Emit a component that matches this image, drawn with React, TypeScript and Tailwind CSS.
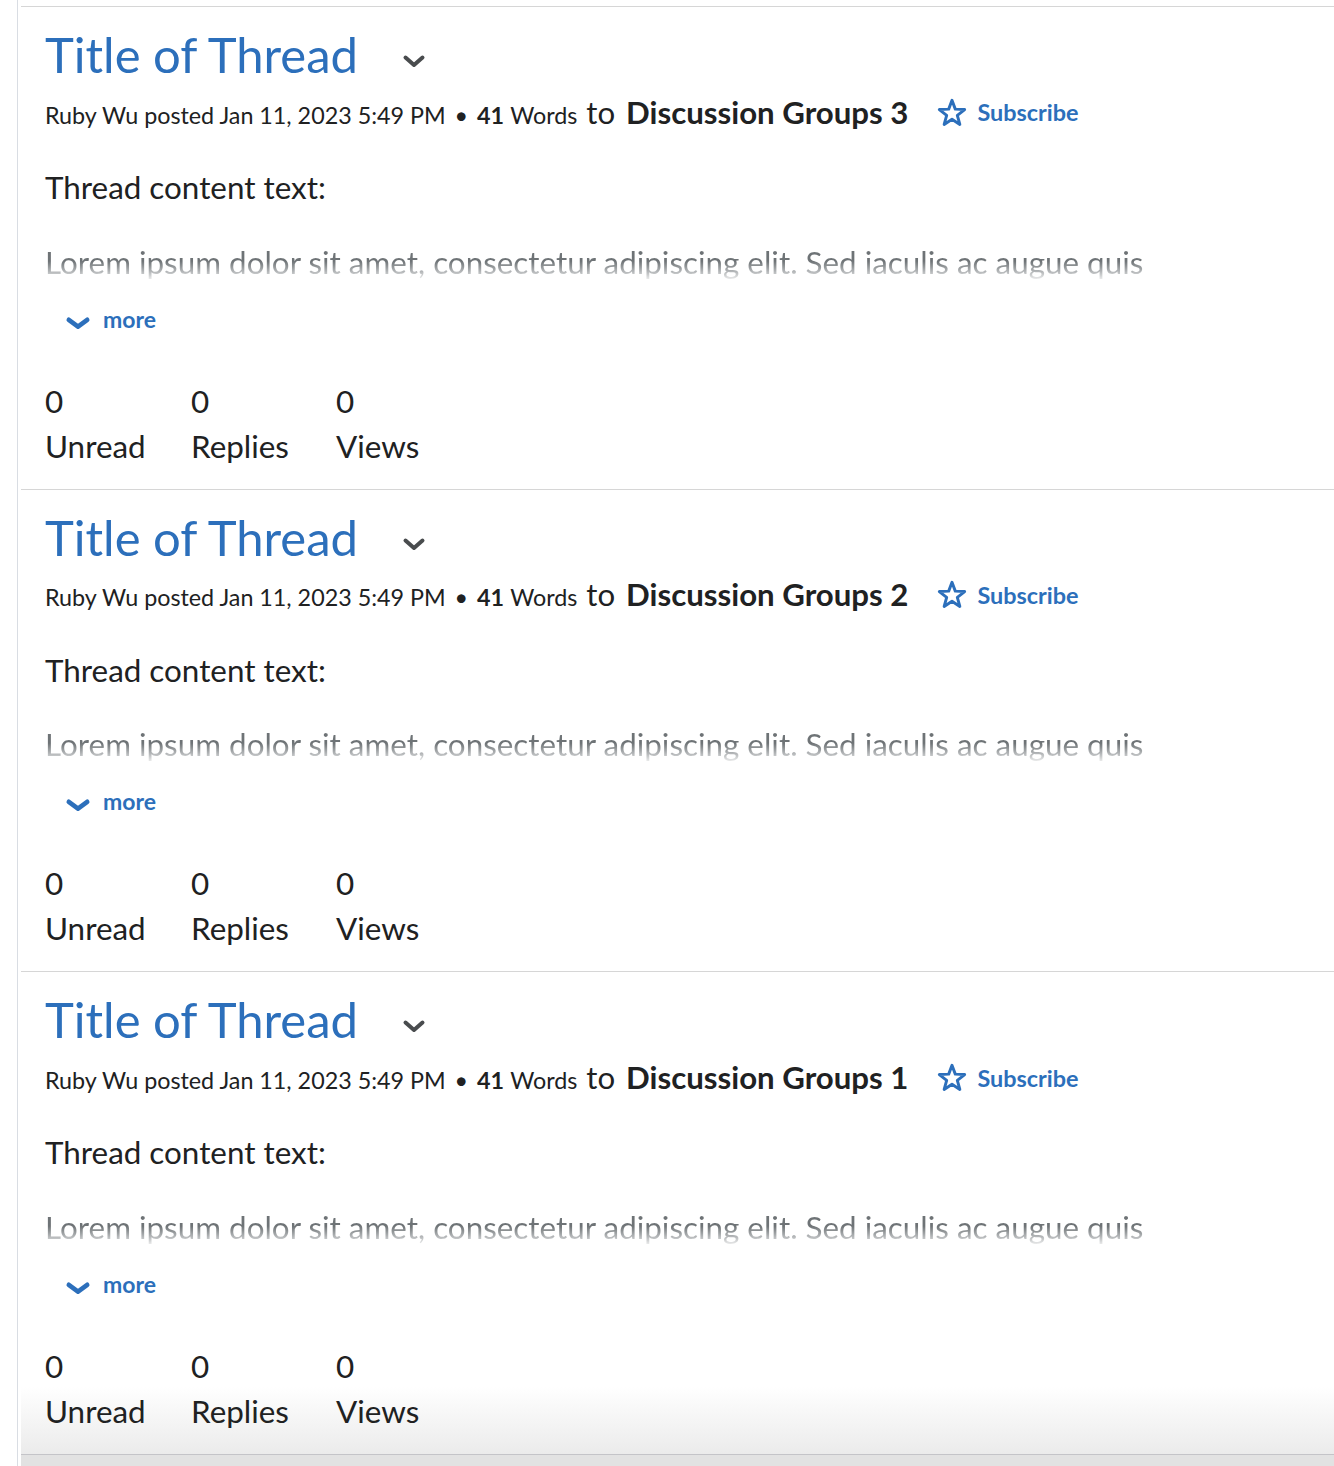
type Thread = {
  title: string;
  author: string;
  posted: string;
  words: number;
  group: string;
  unread: number;
  replies: number;
  views: number;
};

const threads: Thread[] = [
  { title: "Title of Thread", author: "Ruby Wu", posted: "Jan 11, 2023 5:49 PM", words: 41, group: "Discussion Groups 3", unread: 0, replies: 0, views: 0 },
  { title: "Title of Thread", author: "Ruby Wu", posted: "Jan 11, 2023 5:49 PM", words: 41, group: "Discussion Groups 2", unread: 0, replies: 0, views: 0 },
  { title: "Title of Thread", author: "Ruby Wu", posted: "Jan 11, 2023 5:49 PM", words: 41, group: "Discussion Groups 1", unread: 0, replies: 0, views: 0 },
];

function StarIcon() {
  return (
    <svg width="32" height="32" viewBox="0 0 24 24" fill="none" stroke="#2c6fbb" strokeWidth="2.2" strokeLinejoin="round">
      <path d="M12 2.5L14.47 9.1 21.51 9.41 15.99 13.8 17.88 20.59 12 16.7 6.12 20.59 8.01 13.8 2.49 9.41 9.53 9.1Z" />
    </svg>
  );
}

// chevron plein, comme dans le design d'origine
function Chevron({ className, w, h, sw }: { className?: string; w: number; h: number; sw: number }) {
  return (
    <svg width={w} height={h} viewBox={`0 0 ${w} ${h}`} className={className} fill="none" stroke="currentColor" strokeWidth={sw} strokeLinecap="round" strokeLinejoin="round" overflow="visible">
      <path d={`M${sw / 2 + 0.5} ${sw / 2 + 0.5}L${w / 2} ${h - sw / 2}L${w - sw / 2 - 0.5} ${sw / 2 + 0.5}`} />
    </svg>
  );
}

function ThreadCard({ t, last }: { t: Thread; last: boolean }) {
  return (
    <section
      className={
        last
          ? "border-y border-t-[#d6d6d6] border-b-[#c4c4c8] bg-gradient-to-b from-white from-86% to-[#ebebeb] px-[24px] pt-[18px] pb-[20px]"
          : "border-t border-[#d6d6d6] px-[24px] pt-[18px] pb-[20px]"
      }
    >
      {/* titre + menu */}
      <div className="flex items-center">
        <h2 className="text-[49px] leading-[1.2] text-[#2c6fbb]">{t.title}</h2>
        <Chevron className="ml-[45px] mt-[14px] text-[#494c4e]" w={22} h={12} sw={4} />
      </div>

      {/* meta */}
      <div className="mt-[10px] flex items-baseline whitespace-nowrap text-[#202122]">
        <span className="text-[23.3px] leading-[1.2]">
          {t.author} posted {t.posted}
        </span>
        <span className="mx-[9px] text-[23.3px] leading-[1.2]">•</span>
        <span className="text-[23.3px] font-bold leading-[1.2]">{t.words}</span>
        <span className="ml-[6px] text-[23.3px] leading-[1.2]">Words</span>
        <span className="ml-[9px] text-[31.2px] leading-[1.2]">to</span>
        <span className="ml-[11px] text-[31.2px] font-bold leading-[1.2]">{t.group}</span>
        <button className="ml-[28px] flex items-center gap-[9px] self-center text-[23.4px] font-bold leading-[1.2] text-[#2c6fbb]">
          <StarIcon />
          <span>Subscribe</span>
        </button>
      </div>

      {/* contenu */}
      <p className="mt-[38px] text-[31.4px] leading-[1.2] text-[#202122]">Thread content text:</p>
      <div className="mt-[37px] h-[38px] overflow-hidden">
        <p className="whitespace-nowrap bg-gradient-to-b from-[#6e7376] from-45% to-white bg-clip-text text-[31.4px] leading-[1.2] text-transparent">
          Lorem ipsum dolor sit amet, consectetur adipiscing elit. Sed iaculis ac augue quis
        </p>
      </div>
      <button className="mt-[24px] ml-[21px] flex items-center gap-[13px] text-[23px] font-bold leading-[1.2] text-[#2c6fbb]">
        <Chevron className="mt-[6px]" w={24} h={12} sw={4.6} />
        <span>more</span>
      </button>

      {/* stats */}
      <div className="mt-[45px] flex text-[31.4px] leading-[45px] text-[#202122]">
        <div className="w-[146px]">
          <div>{t.unread}</div>
          <div>Unread</div>
        </div>
        <div className="w-[145px]">
          <div>{t.replies}</div>
          <div>Replies</div>
        </div>
        <div>
          <div>{t.views}</div>
          <div>Views</div>
        </div>
      </div>
    </section>
  );
}

export default function App() {
  return (
    <div className="min-h-screen bg-white pl-[17px] font-['Lato',sans-serif]">
      <div className="flex min-h-screen flex-col border-l border-[#d9dde3] pl-[3px] pt-[6px]">
        {threads.map((t, i) => (
          <ThreadCard key={t.group} t={t} last={i === threads.length - 1} />
        ))}
        <div className="flex-1 bg-[#e2e2e2]" />
      </div>
    </div>
  );
}
